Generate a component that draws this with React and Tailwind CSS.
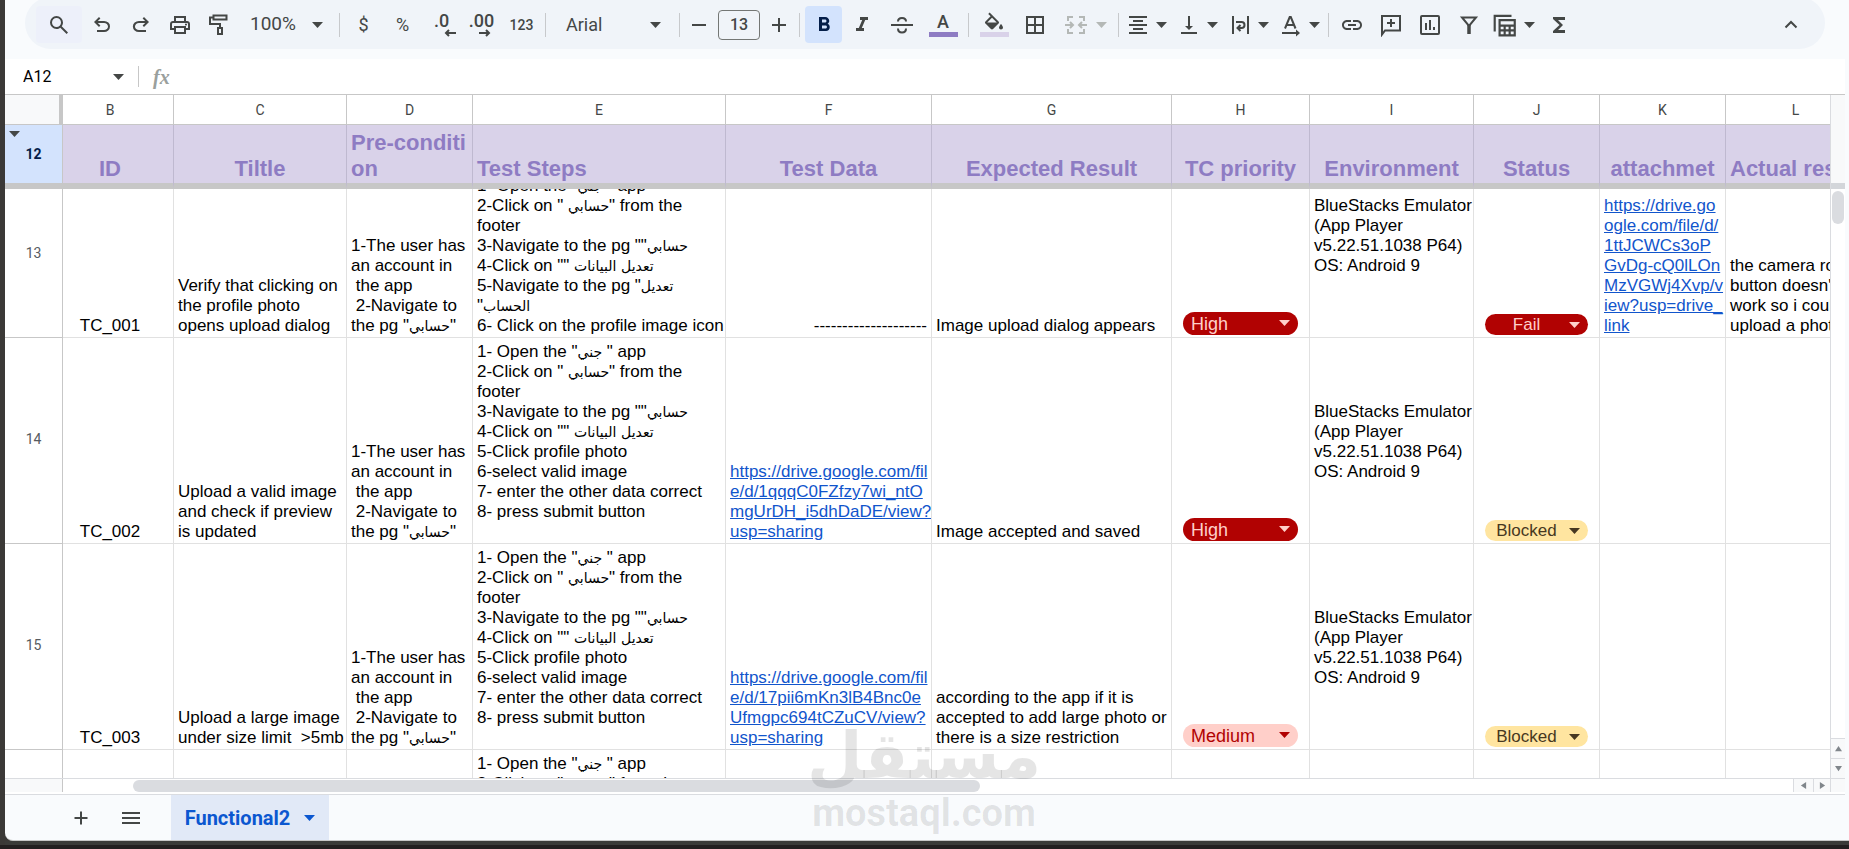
import React, { useState } from 'react';
import {
  MdBorderAll,
  MdFormatAlignCenter,
  MdFormatBold,
  MdFormatItalic,
  MdFunctions,
  MdInsertLink,
  MdMenu,
  MdVerticalAlignBottom,
} from 'react-icons/md';

const Caret = ({ className = '' }) => (
  <svg viewBox="0 0 10 5" preserveAspectRatio="none" className={`w-[11px] h-[6px] shrink-0 ${className}`} fill="currentColor" aria-hidden="true">
    <path d="M0 0h10L5 5z" />
  </svg>
);

// Icons on the 960 unit grid
const Symbol = ({ d }) => (
  <svg viewBox="0 -960 960 960" className="w-6 h-6" fill="currentColor" aria-hidden="true">
    <path d={d} />
  </svg>
);

// Icons on a 24 unit grid, stroked
const Line = ({ children, className = 'w-6 h-6' }) => (
  <svg viewBox="0 0 24 24" className={className} fill="none" stroke="currentColor" strokeWidth="2" aria-hidden="true">
    {children}
  </svg>
);

const SearchIcon = () => (
  <Symbol d="M784-120 532-372q-30 24-69 38t-83 14q-109 0-184.5-75.5T120-580q0-109 75.5-184.5T380-840q109 0 184.5 75.5T640-580q0 44-14 83t-38 69l252 252-56 56ZM380-400q75 0 127.5-52.5T560-580q0-75-52.5-127.5T380-760q-75 0-127.5 52.5T200-580q0 75 52.5 127.5T380-400Z" />
);
const UndoIcon = () => (
  <Symbol d="M280-200v-80h284q63 0 109.5-40T720-420q0-60-46.5-100T564-560H312l104 104-56 56-200-200 200-200 56 56-104 104h252q97 0 169.5 63T800-420q0 94-72.5 157T564-200H280Z" />
);
const RedoIcon = () => (
  <Symbol d="M396-200q-97 0-169.5-63T154-420q0-94 72.5-157T396-640h252L544-744l56-56 200 200-200 200-56-56 104-104H396q-63 0-109.5 40T240-420q0 60 46.5 100T396-280h284v80H396Z" />
);
const PrintIcon = () => (
  <Symbol d="M640-640v-120H320v120h-80v-200h480v200h-80Zm-480 80h640-640Zm560 100q17 0 28.5-11.5T760-500q0-17-11.5-28.5T720-540q-17 0-28.5 11.5T680-500q0 17 11.500 28.500T720-460Zm-80 260v-160H320v160h320Zm80 80H240v-160H80v-240q0-51 35-85.500t85-34.500h560q51 0 85.500 34.500T880-520v240H720v160Zm80-240v-160q0-17-11.500-28.500T760-560H200q-17 0-28.500 11.500T160-520v160h80v-80h480v80h80Z" />
);
const PaintIcon = () => (
  <Line>
    <path d="M6.500 2.500h13v4h-13zM6.500 4.500H3V11h10v4M11 15h4v6h-4z" />
  </Line>
);
const StrikeIcon = () => (
  <Line>
    <path d="M1 12h22M16 8.500C16 6.500 14.500 5 12 5S8 6.500 8 8.500M16 15.500c0 2.500-1.500 4-4 4s-4-1.500-4-4" />
  </Line>
);
const MergeIcon = () => (
  <Line>
    <path d="M9 4H4v4M4 16v4h5M15 4h5v4M20 16v4h-5M1 12h8M6 9l3 3-3 3M23 12h-8M18 9l-3 3 3 3" />
  </Line>
);
const WrapIcon = () => (
  <Line>
    <path d="M5 3v18M20 3v18M8 9h5.500a3 3 0 0 1 0 6H10M12.500 12l-3 3 3 3" />
  </Line>
);
const RotateIcon = () => (
  <Line>
    <path d="M6 15.500L10.700 4h1.100l4.700 11.500M7.800 12h7M3 20h15" />
    <path d="M17 16.500l4 3.500-4 3.500z" fill="currentColor" stroke="none" />
  </Line>
);
const CommentIcon = () => (
  <Line>
    <path d="M3 21.500V3h18v14.500H6zM12 6v8M8 10h8" />
  </Line>
);
const ChartIcon = () => (
  <Line>
    <rect x="3" y="3" width="18" height="18" rx="1" />
    <path d="M8 10v7M12 7v10M16 14v3" />
  </Line>
);
const FilterIcon = () => (
  <Line>
    <path d="M5 4.500h14l-7 8.500z" />
    <path d="M12 12v9" strokeWidth="3.500" />
  </Line>
);
const TableViewsIcon = () => (
  <Line className="w-[26px] h-[26px]">
    <path d="M2.500 18V3.500H18M7 7.500h14v14H7zM7 12.500h14M7 17h14M11.700 12v9M16.300 12v9" />
  </Line>
);

const DecimalIcon = ({ label, more }) => (
  <span className="flex flex-col items-start text-lg leading-4 font-medium">
    {label}
    <svg viewBox="0 0 12 8" className={more ? 'ml-2.5 w-3 h-2' : 'ml-2.5 -mr-2 w-3 h-2'} fill="none" stroke="currentColor" strokeWidth="2">
      <path d={more ? 'M0 4h10M7 1l3 3-3 3' : 'M12 4H2M5 1L2 4l3 3'} />
    </svg>
  </span>
);

const ColorIcon = ({ children, bar }) => (
  <span className="flex flex-col items-center">
    {children}
    <span className={`w-[29px] h-[5px] ${bar}`} />
  </span>
);

const Tool = ({ label, children, className = 'w-[39px]' }) => (
  <button aria-label={label} title={label} className={`h-[37px] shrink-0 flex items-center justify-center rounded ${className}`}>
    {children}
  </button>
);

const MenuTool = ({ label, children, className = 'w-[51px]' }) => (
  <Tool label={label} className={`gap-1.5 ${className}`}>
    {children}
    <Caret />
  </Tool>
);

const Divider = ({ className = 'mx-1' }) => <span className={`w-px h-6 shrink-0 bg-[#c7c9cc] ${className}`} />;

const Toolbar = () => {
  const [fontSize, setFontSize] = useState(13);

  return (
    <div className="bg-[#f9fbfd] pl-5 pr-6 pb-[10px]">
      <div className="-mt-[3px] pt-[3px] h-[52px] rounded-full bg-[#f0f4f9] flex items-center pl-[11px] pr-4 text-[#444746] overflow-hidden font-['Roboto',sans-serif]">
        <Tool label="Search the menus" className="w-[46px] bg-[#edf0fa]"><SearchIcon /></Tool>
        <Tool label="Undo"><UndoIcon /></Tool>
        <Tool label="Redo"><RedoIcon /></Tool>
        <Tool label="Print"><PrintIcon /></Tool>
        <Tool label="Paint format"><PaintIcon /></Tool>
        <Tool label="Zoom" className="w-[97px] gap-4 text-[19px]">100%<Caret /></Tool>
        <Divider />
        <Tool label="Format as currency"><span className="text-lg">$</span></Tool>
        <Tool label="Format as percent"><span className="text-lg">%</span></Tool>
        <Tool label="Decrease decimal places"><DecimalIcon label=".0" /></Tool>
        <Tool label="Increase decimal places" className="w-[41px]"><DecimalIcon label=".00" more /></Tool>
        <Tool label="More formats"><span className="text-sm font-medium">123</span></Tool>
        <Divider />
        <Tool label="Font" className="w-[125px] justify-between! pl-4 pr-3.5 text-lg">Arial<Caret /></Tool>
        <Divider />
        <Tool label="Decrease font size" className="w-[30px]">
          <Line><path d="M5 12h14" /></Line>
        </Tool>
        <input
          aria-label="Font size"
          value={fontSize}
          onChange={(e) => setFontSize(Number(e.target.value) || 0)}
          className="w-[42px] h-[30px] mx-1 shrink-0 rounded border border-[#747775] text-center text-base font-medium bg-transparent"
        />
        <Tool label="Increase font size" className="w-[30px]">
          <Line><path d="M5 12h14M12 5v14" /></Line>
        </Tool>
        <Divider className="mx-[5px]" />
        <Tool label="Bold" className="w-[37px] bg-[#d3e3fd] text-[#041e49]"><MdFormatBold className="w-6 h-6" /></Tool>
        <Tool label="Italic" className="w-10"><MdFormatItalic className="w-6 h-6" /></Tool>
        <Tool label="Strikethrough" className="w-10"><StrikeIcon /></Tool>
        <Tool label="Text color" className="w-[42px]">
          <ColorIcon bar="bg-[#8e7cc3]"><span className="text-lg leading-5 font-medium">A</span></ColorIcon>
        </Tool>
        <Divider />
        <Tool label="Fill color" className="w-[42px]">
          <ColorIcon bar="bg-[#d9d2e9]">
            <svg viewBox="0 0 24 19" className="w-6 h-5" fill="currentColor">
              <path d="M16.560 8.940L7.620 0 6.210 1.410l2.380 2.380-5.150 5.150c-.590.590-.590 1.540 0 2.120l5.500 5.500c.290.290.680.440 1.060.440s.770-.150 1.060-.440l5.500-5.500c.590-.580.590-1.530 0-2.120zM5.210 10L10 5.210 14.790 10H5.210zM19 11.500s-2 2.170-2 3.500c0 1.100.900 2 2 2s2-.900 2-2c0-1.330-2-3.500-2-3.500z" />
            </svg>
          </ColorIcon>
        </Tool>
        <Tool label="Borders" className="w-10"><MdBorderAll className="w-6 h-6" /></Tool>
        <MenuTool label="Merge cells" className="w-[61px] gap-2 text-[#b4b8b6]"><MergeIcon /></MenuTool>
        <Divider className="mx-0.5" />
        <MenuTool label="Horizontal align"><MdFormatAlignCenter className="w-6 h-6" /></MenuTool>
        <MenuTool label="Vertical align"><MdVerticalAlignBottom className="w-6 h-6" /></MenuTool>
        <MenuTool label="Text wrapping"><WrapIcon /></MenuTool>
        <MenuTool label="Text rotation"><RotateIcon /></MenuTool>
        <Divider className="mx-[3px]" />
        <Tool label="Insert link"><MdInsertLink className="w-6 h-6" /></Tool>
        <Tool label="Insert comment"><CommentIcon /></Tool>
        <Tool label="Insert chart"><ChartIcon /></Tool>
        <Tool label="Create a filter"><FilterIcon /></Tool>
        <MenuTool label="Table views"><TableViewsIcon /></MenuTool>
        <Tool label="Functions"><MdFunctions className="w-6 h-6" /></Tool>
        <Tool label="Hide the menus" className="w-[37px] ml-auto">
          <Line><path d="M6.500 14.500L12 9l5.500 5.500" /></Line>
        </Tool>
      </div>
    </div>
  );
};

const FormulaBar = () => (
  <div className="h-[35px] flex items-center bg-white mr-1">
    <input aria-label="Name box" defaultValue="A12" className="w-[89px] pl-[18px] text-base text-black font-['Roboto',sans-serif]" />
    <button aria-label="Named ranges" className="w-12 h-6 flex items-center justify-center text-[#444746]"><Caret /></button>
    <span className="w-px h-[21px] -ml-1 bg-[#c7c7c7]" />
    <label htmlFor="formula" className="ml-[14px] w-6 text-xl leading-6 italic font-bold text-[#9aa09d] font-['Liberation_Serif',serif]">fx</label>
    <input id="formula" className="flex-1" />
  </div>
);

const columns = [
  { letter: 'B', title: 'ID', width: 111, pad: 'pl-0 pr-4' },
  { letter: 'C', title: 'Tiltle', width: 173 },
  { letter: 'D', title: 'Pre-conditi\non', width: 126, left: true },
  { letter: 'E', title: 'Test Steps', width: 253, left: true },
  { letter: 'F', title: 'Test Data', width: 206 },
  { letter: 'G', title: 'Expected Result', width: 240 },
  { letter: 'H', title: 'TC priority', width: 138 },
  { letter: 'I', title: 'Environment', width: 164 },
  { letter: 'J', title: 'Status', width: 126 },
  { letter: 'K', title: 'attachmet', width: 126 },
  { letter: 'L', title: 'Actual result', width: 140 },
];

const preCondition = '1-The user has\nan account in\n the app\n 2-Navigate to\nthe pg "حسابي"';
const environment = 'BlueStacks Emulator\n(App Player\nv5.22.51.1038 P64)\nOS: Android 9\n\n\n ';
const openSteps = '1- Open the "جني " app\n2-Click on " حسابي" from the\nfooter\n3-Navigate to the pg ""حسابي\n4-Click on "" تعديل البيانات\n';
const uploadSteps = `${openSteps}5-Click profile photo\n6-select valid image\n7- enter the other data correct\n8- press submit button\n `;

const testCases = [
  {
    row: 13,
    id: 'TC_001',
    title: 'Verify that clicking on\nthe profile photo\nopens upload dialog',
    preCondition,
    steps: `${openSteps}5-Navigate to the pg "تعديل\n"الحساب\n6- Click on the profile image icon`,
    data: '--------------------',
    expected: 'Image upload dialog appears',
    priority: 'High',
    environment,
    status: 'Fail',
    attachment: 'https://drive.go\nogle.com/file/d/\n1ttJCWCs3oP\nGvDg-cQ0lLOn\nMzVGWj4Xvp/v\niew?usp=drive_\nlink',
    actual: 'the camera roll\nbutton doesn\'t\nwork so i couldn\'t\nupload a photo',
  },
  {
    row: 14,
    id: 'TC_002',
    title: 'Upload a valid image\nand check if preview\nis updated',
    preCondition,
    steps: uploadSteps,
    dataLink: 'https://drive.google.com/fil\ne/d/1qqqC0FZfzy7wi_ntO\nmgUrDH_i5dhDaDE/view?\nusp=sharing',
    expected: 'Image accepted and saved',
    priority: 'High',
    environment,
    status: 'Blocked',
  },
  {
    row: 15,
    id: 'TC_003',
    title: 'Upload a large image\nunder size limit  >5mb',
    preCondition,
    steps: uploadSteps,
    dataLink: 'https://drive.google.com/fil\ne/d/17pii6mKn3lB4Bnc0e\nUfmgpc694tCZuCV/view?\nusp=sharing',
    expected: 'according to the app if it is\naccepted to add large photo or\nthere is a size restriction',
    priority: 'Medium',
    environment,
    status: 'Blocked',
  },
  { row: 16, steps: uploadSteps },
];

const chipColors = {
  High: 'bg-[#b10202] text-[#ffcfc9]',
  Medium: 'bg-[#ffcfc9] text-[#b10202]',
  Fail: 'bg-[#b10202] text-[#ffcfc9]',
  Blocked: 'bg-[#ffe5a0] text-[#473821]',
};

const Chip = ({ label, value, options, className, selectClass }) => (
  <div className={`relative mx-auto mb-px rounded-full ${chipColors[value]} ${className}`}>
    <select aria-label={label} defaultValue={value} className={`block w-full h-full appearance-none ${selectClass}`}>
      {options.map((option) => <option key={option}>{option}</option>)}
    </select>
    <Caret className="absolute right-2 top-2 pointer-events-none" />
  </div>
);

const Cell = ({ children, className = '', clip }) => (
  <td className="p-0 align-bottom border-r border-b border-[#e1e1e1]">
    <div className={`px-1 pt-1 pb-px flex flex-col justify-end whitespace-pre overflow-hidden ${clip ? 'h-[148px]' : ''} ${className}`}>
      {children}
    </div>
  </td>
);

// The Arabic face runs large beside the Latin one, so its words are set smaller
const MixedText = ({ text = '' }) => (
  <span>
    {text.split(/([\u0600-\u06FF]+)/).map((part, i) => (
      i % 2 ? <span key={i} className="text-[14px] font-['DejaVu_Sans',sans-serif]">{part}</span> : part
    ))}
  </span>
);

const SheetLink = ({ text }) => (
  <a href={text.replace(/\n/g, '')} className="text-[#1155cc] underline">{text}</a>
);

const TestRow = ({ test }) => {
  const clip = test.row === 13;
  return (
    <tr>
      <th scope="row" className={`border-r border-b border-[#c7c7c7] text-sm font-normal text-[#575b5f] font-['Roboto',sans-serif] ${clip ? 'pb-5' : 'pb-1'}`}>
        {test.row !== 16 && test.row}
      </th>
      <Cell clip={clip} className="text-center pl-0 pr-4">{test.id}</Cell>
      <Cell clip={clip}>{test.title}</Cell>
      <Cell clip={clip}><MixedText text={test.preCondition} /></Cell>
      <Cell clip={clip}><MixedText text={test.steps} /></Cell>
      <Cell clip={clip} className={test.data ? 'text-right' : ''}>
        {test.dataLink ? <SheetLink text={test.dataLink} /> : test.data}
      </Cell>
      <Cell clip={clip}>{test.expected}</Cell>
      <Cell clip={clip}>
        {test.priority && (
          <Chip
            label={`Priority of ${test.id}`}
            value={test.priority}
            options={['High', 'Medium', 'Low']}
            className="w-[115px] h-[23px]"
            selectClass="pl-2 text-lg leading-5"
          />
        )}
      </Cell>
      <Cell clip={clip}>{test.environment}</Cell>
      <Cell clip={clip}>
        {test.status && (
          <Chip
            label={`Status of ${test.id}`}
            value={test.status}
            options={['Pass', 'Fail', 'Blocked']}
            className="w-[103px] h-[21px]"
            selectClass="pr-5 text-center [text-align-last:center] leading-5"
          />
        )}
      </Cell>
      <Cell clip={clip}>{test.attachment && <SheetLink text={test.attachment} />}</Cell>
      <Cell clip={clip}>{test.actual}</Cell>
    </tr>
  );
};

const Sheet = () => (
  <div className="flex-1 min-w-0 overflow-hidden bg-white">
    <table className="w-[1861px] table-fixed border-separate border-spacing-0 text-[17px] leading-5 text-black font-['Liberation_Sans','DejaVu_Sans',sans-serif]">
      <colgroup>
        <col style={{ width: 58 }} />
        {columns.map((col) => <col key={col.letter} style={{ width: col.width }} />)}
      </colgroup>
      <thead>
        <tr className="h-[30px] text-sm text-[#444746] font-['Roboto',sans-serif]">
          <td className="bg-[#f8f9fa] border-r-4 border-b border-[#c7c7c7]" />
          {columns.map((col) => (
            <th key={col.letter} scope="col" className={`p-0 font-normal border-r border-b border-[#c7c7c7] ${col.pad || ''}`}>
              {col.letter}
            </th>
          ))}
        </tr>
        <tr className="h-[64px]">
          <th scope="row" className="relative p-0 bg-[#d3e3fd] border-r border-b-6 border-[#c7c7c7] text-sm font-bold text-[#041e49] font-['Roboto',sans-serif]">
            12
            <Caret className="absolute left-1 top-1.5 text-[#444746]" />
          </th>
          {columns.map((col) => (
            <th
              key={col.letter}
              className={`px-1 pt-0 pb-px align-bottom bg-[#d9d2e9] border-r border-r-[#bfb9d0] border-b-6 border-b-[#c7c7c7] text-[22px] leading-[26px] font-bold text-[#8e7cc3] whitespace-pre overflow-hidden ${col.left ? 'text-left' : 'text-center'} ${col.pad || ''}`}
            >
              {col.title}
            </th>
          ))}
        </tr>
      </thead>
      <tbody>
        {testCases.map((test) => <TestRow key={test.row} test={test} />)}
      </tbody>
    </table>
  </div>
);

const ScrollButton = ({ label, d, className }) => (
  <button aria-label={label} className={`flex items-center justify-center bg-[#f8f9fa] border-[#dadce0] text-[#80868b] ${className}`}>
    <svg viewBox="0 0 8 8" className="w-[7px] h-[7px]" fill="currentColor"><path d={d} /></svg>
  </button>
);

const VerticalScrollbar = () => (
  <div className="w-[15px] shrink-0 flex flex-col bg-white border-l border-[#dadce0]">
    <div className="h-[88px] bg-[#f8f9fa]" />
    <div className="h-[6px] bg-[#d3d6da]" />
    <div className="mt-0.5 mx-px h-[33px] rounded-full bg-[#dadce0]" />
    <ScrollButton label="Scroll up" d="M4 1l4 6H0z" className="mt-auto h-5 border-t" />
    <ScrollButton label="Scroll down" d="M4 7L0 1h8z" className="h-5 border-t" />
  </div>
);

const HorizontalScrollbar = () => (
  <div className="h-[17px] shrink-0 flex bg-white border-y border-[#dadce0] pb-0.5">
    <div className="w-[58px] bg-[#f8f9fa] border-r border-[#c7c7c7]" />
    <div className="flex-1 flex pl-[70px] pt-px">
      <div className="w-[51%] h-3 rounded-full bg-[#dadce0]" />
    </div>
    <ScrollButton label="Scroll left" d="M1 4l6-4v8z" className="w-5 border-l" />
    <ScrollButton label="Scroll right" d="M7 4L1 0v8z" className="w-[17px] border-l" />
    <div className="w-[15px] bg-[#f8f9fa] border-l border-[#dadce0]" />
  </div>
);

const SheetTabs = () => (
  <div className="h-[45px] shrink-0 flex items-stretch text-[#444746]">
    <button aria-label="Add sheet" className="ml-14 w-10 flex items-center justify-center">
      <Line><path d="M5.500 12h13M12 5.500v13" /></Line>
    </button>
    <button aria-label="All sheets" className="ml-2.5 w-10 flex items-center justify-center"><MdMenu className="w-6 h-6" /></button>
    <button className="ml-5 w-[158px] flex items-center justify-center gap-3.5 bg-[#e1e9f7] text-[#0b57d0] text-xl font-bold font-['Roboto',sans-serif]">
      Functional2
      <Caret />
    </button>
  </div>
);

const Watermark = () => (
  <div className="absolute bottom-[18px] left-1/2 ml-[-111px] w-[221px] flex flex-col items-center text-black/10 font-bold pointer-events-none">
    <span className="text-[64px] leading-[78px] font-['DejaVu_Sans',sans-serif]">مستقل</span>
    <span className="text-[38px] leading-9 font-['Roboto',sans-serif]">mostaql.com</span>
  </div>
);

const App = () => (
  <div className="relative h-screen flex flex-col bg-[#3b3937] pl-[5px] overflow-hidden">
    <div className="flex-1 min-h-0 flex flex-col bg-[#f9fbfd] rounded-bl-lg border-b border-[#c7c7c7] overflow-hidden">
      <Toolbar />
      <FormulaBar />
      <div className="flex-1 min-h-0 flex mr-1 border-t border-[#c7c7c7]">
        <Sheet />
        <VerticalScrollbar />
      </div>
      <div className="mr-1"><HorizontalScrollbar /></div>
      <SheetTabs />
    </div>
    <div className="h-1 bg-[#3b3b39]" />
    <div className="h-1 -ml-[5px] bg-[#231f20]" />
    <Watermark />
  </div>
);

export default App;
